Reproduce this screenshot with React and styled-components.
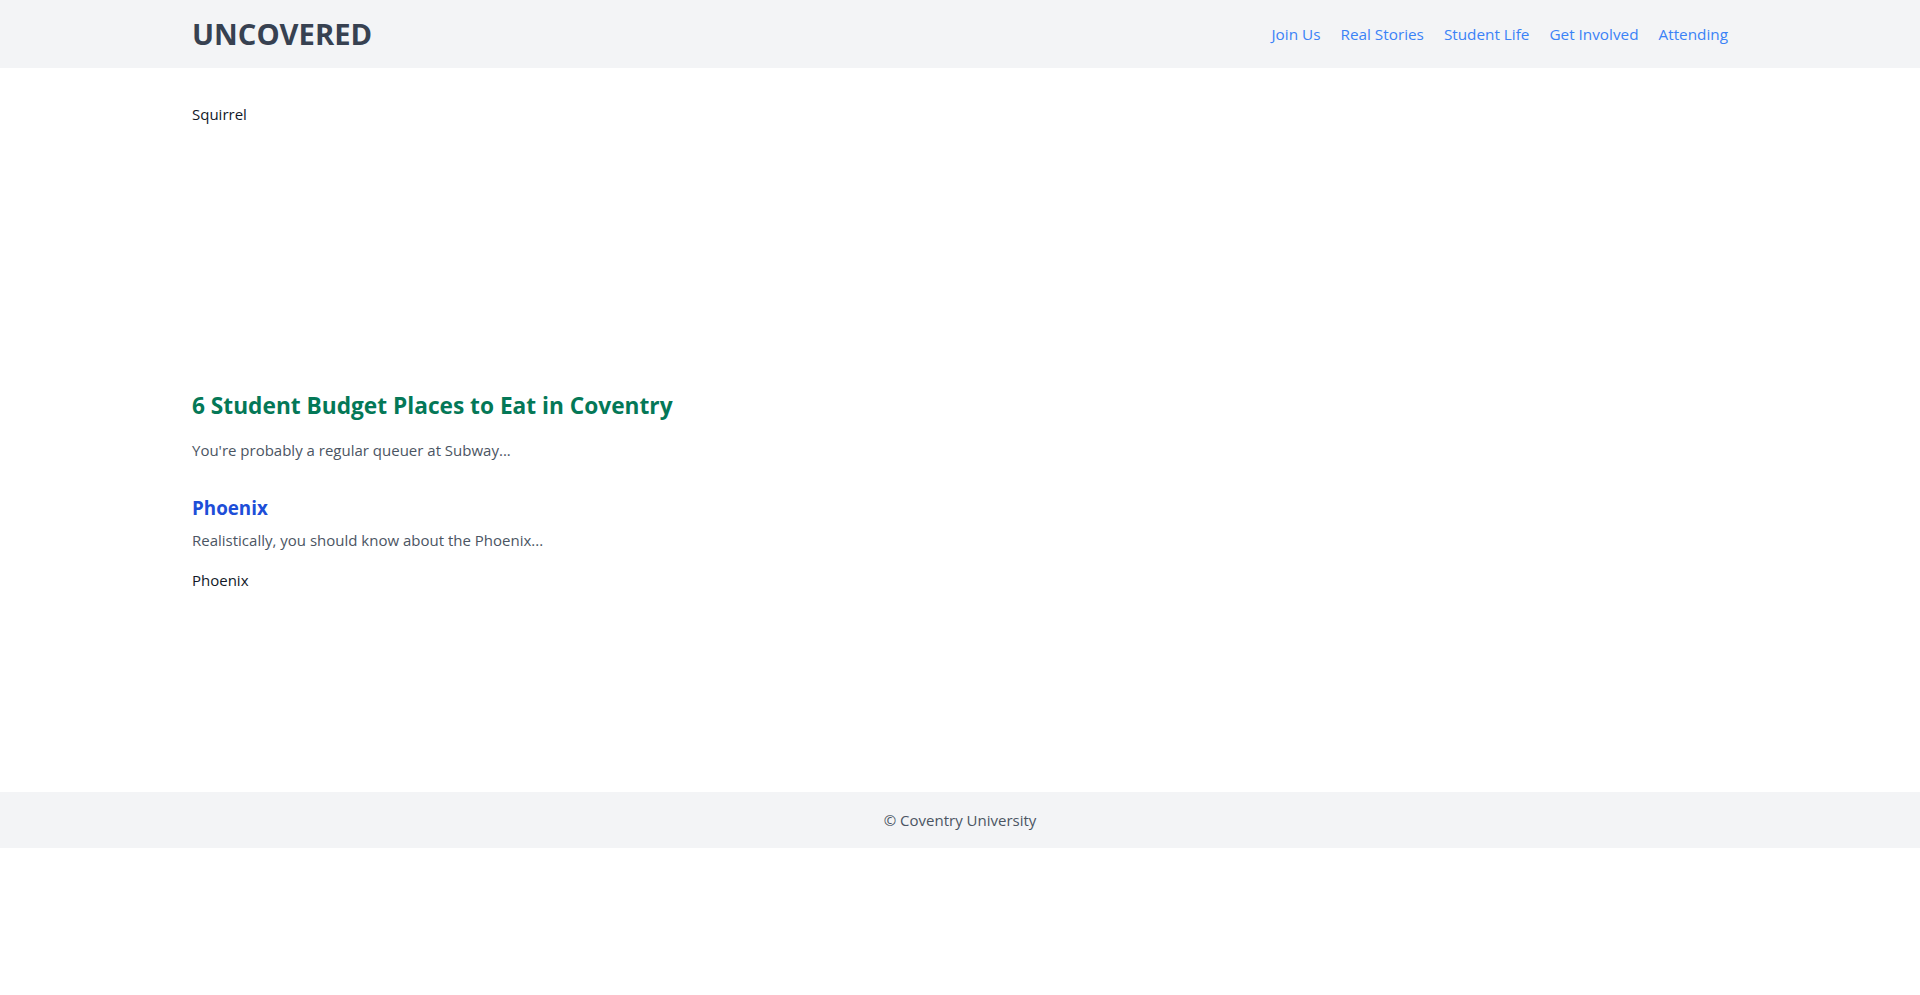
import React from "react";
import styled, { createGlobalStyle } from "styled-components";

const GlobalStyle = createGlobalStyle`
  html, body {
    margin: 0;
    padding: 0;
    background: #fff;
    font-family: "Open Sans", "Noto Sans", sans-serif;
  }
  * {
    box-sizing: border-box;
  }
`;

const Page = styled.div`
  display: flex;
  flex-direction: column;
`;

const Header = styled.header`
  background-color: #f3f4f6;
  height: 68px;
`;

const Container = styled.div`
  max-width: 1536px;
  margin: 0 auto;
  height: 100%;
`;

const HeaderInner = styled(Container)`
  display: flex;
  align-items: center;
  justify-content: space-between;
`;

const Logo = styled.a`
  font-size: 29.2px;
  font-weight: 700;
  color: #374151;
  text-decoration: none;
`;

const Nav = styled.nav`
  display: flex;
  gap: 20px;
`;

const NavLink = styled.a`
  font-size: 15.3px;
  color: #3b82f6;
  text-decoration: none;
`;

const Main = styled.main`
  padding: 32px 0;
`;

const Article = styled.article`
  display: flex;
  flex-direction: column;
`;

const ImageBox = styled.div`
  height: ${(p) => p.$height}px;
  margin-top: ${(p) => p.$top || 0}px;
  font-size: 15px;
  color: #111827;
  line-height: 28px;
`;

const Title = styled.h2`
  margin: ${(p) => p.$top}px 0 0;
  font-size: ${(p) => p.$size}px;
  font-weight: 700;
  line-height: 1.4;
  color: ${(p) => p.$color};
`;

const Excerpt = styled.p`
  margin: ${(p) => p.$top}px 0 0;
  font-size: 15px;
  line-height: 28px;
  color: #4b5563;
`;

const Footer = styled.footer`
  background-color: #f3f4f6;
  height: 56px;
  display: flex;
  align-items: center;
  justify-content: center;
  font-size: 15px;
  color: #4b5563;
`;

const navItems = ["Join Us", "Real Stories", "Student Life", "Get Involved", "Attending"];

export default function App() {
  return (
    <Page>
      <GlobalStyle />
      <Header>
        <HeaderInner>
          <Logo href="#">UNCOVERED</Logo>
          <Nav>
            {navItems.map((item) => (
              <NavLink key={item} href="#">
                {item}
              </NavLink>
            ))}
          </Nav>
        </HeaderInner>
      </Header>

      <Main>
        <Container>
          <Article>
            <ImageBox $height={274}>Squirrel</ImageBox>
            <Title $top={16} $size={22.7} $color="#047857">
              6 Student Budget Places to Eat in Coventry
            </Title>
            <Excerpt $top={14}>You're probably a regular queuer at Subway...</Excerpt>
          </Article>

          <Article>
            <Title $top={31} $size={18.8} $color="#1d4ed8">
              Phoenix
            </Title>
            <Excerpt $top={5}>Realistically, you should know about the Phoenix...</Excerpt>
            <ImageBox $height={194} $top={12}>Phoenix</ImageBox>
          </Article>
        </Container>
      </Main>

      <Footer>© Coventry University</Footer>
    </Page>
  );
}
